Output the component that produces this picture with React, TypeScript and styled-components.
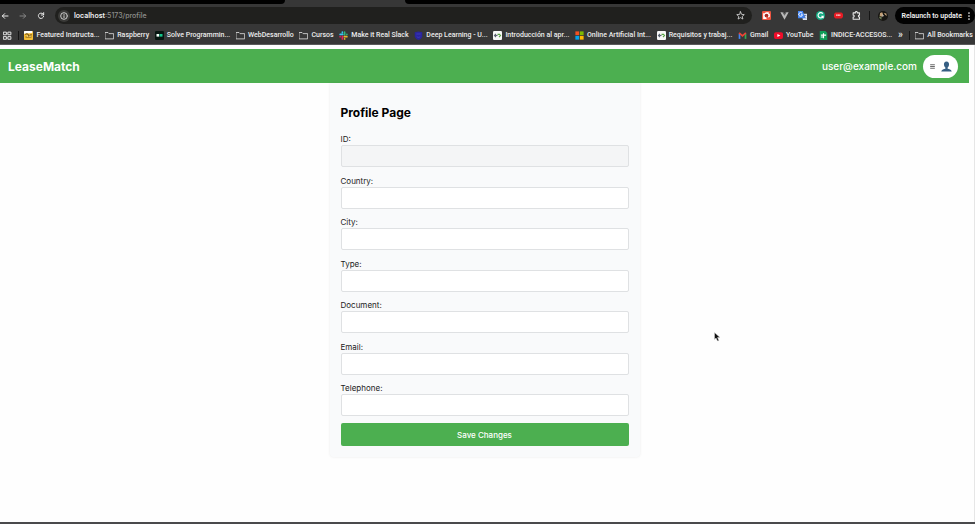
import React from "react";
import styled, { createGlobalStyle, css } from "styled-components";

const GlobalStyle = createGlobalStyle`
  * { box-sizing: border-box; }
  html, body, #root { height: 100%; }
  body { margin: 0; background: #fefefe; color: #222; font-family: Inter, "Liberation Sans", sans-serif; }
  button, input { font: inherit; }
`;

const Screen = styled.div`
  display: flex;
  flex-direction: column;
  min-height: 100vh;
  border-bottom: 2px solid #4a4a4c;
  overflow: hidden;
`;

const Browser = styled.header`
  background: #373737;
  color: #ececec;
  font-family: Roboto, "Liberation Sans", sans-serif;
  font-size: 7px;
  font-weight: 500;
  border-bottom: 1px solid #5a5a5a;
`;

const TabStrip = styled.div`
  display: grid;
  grid-template-columns: 285fr 120fr 570fr;
  height: 4px;
  background: #373737;
`;

const TabGap = styled.div<{ $side: "left" | "right" }>`
  background: #000;
  ${(p) => (p.$side === "left" ? "border-bottom-right-radius: 4px;" : "border-bottom-left-radius: 4px;")}
`;

const Toolbar = styled.div`
  display: flex;
  align-items: center;
  height: 23px;
`;

const NavButtons = styled.nav`
  display: flex;
  gap: 8px;
  padding-right: 9px;
`;

const IconButton = styled.button<{ $dim?: boolean }>`
  display: flex;
  align-items: center;
  justify-content: center;
  width: 10px;
  height: 10px;
  padding: 0;
  border: 0;
  background: none;
  color: ${(p) => (p.$dim ? "#858585" : "#e8e8e8")};
`;

const AddressBar = styled.div`
  display: flex;
  flex: 1;
  align-items: center;
  gap: 4px;
  height: 17px;
  padding: 0 7px 0 3px;
  border-radius: 9px;
  background: #20201e;
`;

const InfoBadge = styled.span`
  display: flex;
  align-items: center;
  justify-content: center;
  width: 12px;
  height: 12px;
  border-radius: 6px;
  background: #3a3a38;
`;

const Address = styled.span`
  flex: 1;
  color: #8f8f8d;
  font-family: Inter, "Liberation Sans", sans-serif;
  font-size: 7px;
  white-space: nowrap;
  b { color: #f2f2f2; font-weight: 600; }
`;

const Extensions = styled.div`
  display: flex;
  align-items: center;
  gap: 8px;
  padding: 0 7px 0 9px;
`;

const Divider = styled.span`
  width: 1px;
  height: 9px;
  background: #151515;
`;

const Relaunch = styled.button`
  display: flex;
  align-items: center;
  gap: 3px;
  height: 17px;
  padding: 0 2px 0 6px;
  border: 0;
  border-radius: 9px;
  background: #020202;
  color: #f1f1f1;
  font-weight: 600;
  white-space: nowrap;
`;

const Bookmarks = styled.nav`
  display: flex;
  align-items: center;
  justify-content: space-between;
  height: 17px;
  padding: 0 2px 1px 2px;
`;

const Bookmark = styled.a`
  display: flex;
  align-items: center;
  gap: 3px;
  color: inherit;
  text-decoration: none;
  white-space: nowrap;
`;

const Overflow = styled.button`
  padding: 0;
  border: 0;
  background: none;
  color: inherit;
  font-size: 10px;
  line-height: 10px;
`;

const Icon = styled.svg<{ $size?: number }>`
  display: block;
  flex: none;
  width: ${(p) => p.$size ?? 9}px;
  height: ${(p) => p.$size ?? 9}px;
`;

const Page = styled.div`
  display: flex;
  flex: 1;
  flex-direction: column;
  padding-top: 4px;
  padding-right: 5px;
  border-right: 1px solid #e6e6e6;
`;

const SiteHeader = styled.header`
  display: flex;
  align-items: center;
  justify-content: space-between;
  height: 34px;
  padding: 0 11px 0 8px;
  background: #4caf50;
  color: #fff;
`;

const Brand = styled.div`
  font-size: 12px;
  font-weight: 700;
`;

const Account = styled.div`
  display: flex;
  align-items: center;
  gap: 6px;
  font-size: 10px;
  font-weight: 500;
`;

const AccountButton = styled.button`
  display: flex;
  align-items: center;
  justify-content: center;
  gap: 5px;
  width: 35px;
  height: 23px;
  padding: 0;
  border: 0;
  border-radius: 12px;
  background: #fff;
`;

const Card = styled.main`
  width: 310px;
  max-width: 100%;
  margin: 0 auto;
  padding: 22px 11px 11px;
  border-radius: 0 0 4px 4px;
  background: #f9fafb;
  box-shadow: 0 0 3px rgba(0, 0, 0, 0.08);
`;

const Title = styled.h1`
  margin: 0 0 12px;
  color: #000;
  font-size: 12px;
  line-height: 16px;
  font-weight: 700;
`;

const Form = styled.form`
  display: flex;
  flex-direction: column;
  gap: 7px;
`;

const Fields = styled.div`
  display: flex;
  flex-direction: column;
  justify-content: space-between;
  min-height: 283px;
`;

const Field = styled.label`
  display: flex;
  flex-direction: column;
  font-size: 8px;
  line-height: 12px;
`;

const controlShape = css`
  width: 100%;
  border-radius: 2px;
`;

const TextInput = styled.input`
  ${controlShape}
  height: 22px;
  padding: 0 5px;
  border: 1px solid #dfe1e3;
  background: #fff;
  &:disabled { background: #f4f5f6; }
`;

const SaveButton = styled.button`
  ${controlShape}
  height: 23px;
  border: 0;
  background: #4caf50;
  color: #fff;
  font-size: 8px;
  font-weight: 500;
`;

const Pointer = styled.svg`
  position: absolute;
  left: 714px;
  top: 332px;
  width: 6px;
  height: 10px;
`;

const stroke = { fill: "none", stroke: "currentColor", strokeWidth: 2, strokeLinecap: "round", strokeLinejoin: "round" } as const;

const glyphs: Record<string, React.ReactNode> = {
  back: <path {...stroke} strokeWidth={3} d="M21 12H4M11 5l-7 7 7 7" />,
  forward: <path {...stroke} strokeWidth={3} d="M3 12h17M13 5l7 7-7 7" />,
  reload: <path {...stroke} strokeWidth={3} d="M20 13a8 8 0 1 1-2-7l2 2M20 2v7h-7" />,
  info: <path {...stroke} strokeWidth={2.4} d="M22 12a10 10 0 1 1-20 0 10 10 0 0 1 20 0M12 11v6M12 7v.5" />,
  star: <path {...stroke} d="m12 2 3 7 7 .6-5.300 4.800 1.700 7.100L12 17.700 5.600 21.500l1.700-7.100L2 9.600 9 9z" />,
  puzzle: <path {...stroke} strokeWidth={2.800} d="M3 5h6c-1-5 6-5 5 0h6v6c-4-1-4 6 0 5v6H3v-6c4 1 4-6 0-5z" />,
  dots: <g fill="currentColor"><circle cx="12" cy="3" r="2.600" /><circle cx="12" cy="12" r="2.600" /><circle cx="12" cy="21" r="2.600" /></g>,
  grid: <path {...stroke} strokeWidth={2.600} d="M2 3h7v7H2zM14 3h7v7h-7zM2 15h7v7H2zM14 15h7v7h-7z" />,
  folder: <path {...stroke} d="M1 4h7l3 3h12v14H1z" />,
  featured: <g><rect width="24" height="24" rx="2" fill="#f3bd35" /><path fill="#fff" d="M0 2a2 2 0 0 1 2-2h20v5L0 7z" /><path stroke="#75510d" strokeWidth="3" fill="none" d="M4 10c2-4 6-3 7 0s7 3 9-1M4 16h16" /><path fill="#f7dc8e" d="M7 12h4v3H7zM14 12h4v3h-4z" /></g>,
  solve: <g><rect width="24" height="24" rx="3" fill="#071611" /><path fill="#f5fffb" d="M4 8h7v7H4z" /><path fill="#13c58a" d="M12 8h8v7h-8z" /></g>,
  slack: <g fill="none" strokeWidth="4.500" strokeLinecap="round"><path stroke="#36c5f0" d="M3 9h7M9 3v1" /><path stroke="#2eb67d" d="M15 3v7M21 9h0" /><path stroke="#ecb22e" d="M14 15h7M15 21h0" /><path stroke="#e01e5a" d="M9 14v7M3 15h0" /></g>,
  deep: <g><path fill="#29259c" d="M2 3l10-2 10 2v12l-4 6-6 3-6-3-4-6z" /><path fill="none" stroke="#4740c3" strokeWidth="2" d="M6 8h12M7 14c3 4 7 4 10 0" /></g>,
  code: <g><rect width="24" height="24" rx="3" fill="#f7f7f7" /><path fill="none" stroke="#5b6270" strokeWidth="3" d="M8 8l-4 4 4 4M4 12h8" /><path fill="none" stroke="#57a341" strokeWidth="3" d="M16 8l4 4-4 4M12 9h6" /></g>,
  microsoft: <g><path fill="#f25022" d="M1 1h10v10H1z" /><path fill="#7fba00" d="M13 1h10v10H13z" /><path fill="#00a4ef" d="M1 13h10v10H1z" /><path fill="#ffb900" d="M13 13h10v10H13z" /></g>,
  gmail: <g fill="none" strokeWidth="4.500"><path stroke="#4285f4" d="M4 21V7" /><path stroke="#34a853" d="M20 21V7" /><path stroke="#ea4335" d="M3 5l9 8 9-8" /></g>,
  youtube: <g><rect y="3" width="24" height="18" rx="5" fill="#f00c29" /><path fill="#fff" d="m9 8 8 4-8 4z" /></g>,
  sheet: <g><path fill="#0f9d58" d="M2 0h15l5 5v19H2z" /><path stroke="#fff" strokeWidth="3" fill="none" d="M5 11h14M12 6v13M5 16h7" /></g>,
  camera: <g><rect width="24" height="24" rx="3" fill="#ed5541" /><path fill="#fff" d="M3 6h5l2-3h8v4h3v8l-4 2-4 4H3z" /><circle cx="12" cy="12" r="5" fill="#a92822" /><path fill="#ed5541" d="M12 13l9 8h-9z" /></g>,
  vue: <g><path fill="#b9b9b9" d="M1 3h6l5 9 5-9h6L12 23z" /><path fill="#696969" d="M7 3h3l2 4 2-4h3l-5 9z" /></g>,
  translate: <g><path fill="#dfe5ef" d="M10 7h14v17H13z" /><path fill="#4285f4" d="M0 0h13l6 19H0z" /><path fill="none" stroke="#fff" strokeWidth="2.500" d="M11 6a5 5 0 1 0 1 4H8" /><path fill="none" stroke="#4c6fb5" strokeWidth="2" d="M15 12h7M18 10v3c0 3-2 5-3 6M17 15l4 5" /></g>,
  grammarly: <g><circle cx="12" cy="12" r="12" fill="#16aa83" /><path fill="none" stroke="#fff" strokeWidth="3" d="M18 7a7 7 0 1 0 1 7h-5M19 13v6" /></g>,
  red: <g><path fill="#e51b23" d="M4 4h16l4 4v8l-4 4H4l-4-4V8z" /><path stroke="#fff" strokeWidth="3" strokeDasharray="3 1" d="M6 11h12" /></g>,
  avatar: <g><circle cx="12" cy="12" r="12" fill="#171612" /><path fill="#c3a078" d="M5 5l5-2 2 5-3 6-5-2zM14 5l6 1 1 6-4-3z" /><path fill="#6c7a57" d="M3 13l6 2-1 6-5-4z" /><path fill="#e5ddd0" d="M10 8l4 3-3 4z" /></g>,
};

function Glyph({ name, size }: { name: string; size?: number }) {
  return <Icon viewBox="0 0 24 24" $size={size} aria-hidden="true">{glyphs[name]}</Icon>;
}

const bookmarks = [
  ["featured", "Featured Instructa..."],
  ["folder", "Raspberry"],
  ["solve", "Solve Programmin..."],
  ["folder", "WebDesarrollo"],
  ["folder", "Cursos"],
  ["slack", "Make it Real Slack"],
  ["deep", "Deep Learning - U..."],
  ["code", "Introducción al apr..."],
  ["microsoft", "Online Artificial Int..."],
  ["code", "Requisitos y trabaj..."],
  ["gmail", "Gmail"],
  ["youtube", "YouTube"],
  ["sheet", "INDICE-ACCESOS..."],
];

const fields = ["ID", "Country", "City", "Type", "Document", "Email", "Telephone"];
const extensions = ["camera", "vue", "translate", "grammarly", "red", "puzzle"];

export default function App() {
  return (
    <Screen>
      <GlobalStyle />
      <Browser>
        <TabStrip><TabGap $side="left" /><span /><TabGap $side="right" /></TabStrip>
        <Toolbar>
          <NavButtons aria-label="History">
            <IconButton aria-label="Back"><Glyph name="back" size={8} /></IconButton>
            <IconButton aria-label="Forward" $dim><Glyph name="forward" size={8} /></IconButton>
            <IconButton aria-label="Reload"><Glyph name="reload" size={8} /></IconButton>
          </NavButtons>
          <AddressBar>
            <InfoBadge><Glyph name="info" size={8} /></InfoBadge>
            <Address><b>localhost</b>:5173/profile</Address>
            <IconButton aria-label="Bookmark this page"><Glyph name="star" /></IconButton>
          </AddressBar>
          <Extensions>
            {extensions.map((name) => (
              <IconButton key={name} aria-label={name}><Glyph name={name} /></IconButton>
            ))}
            <Divider />
            <IconButton aria-label="Account"><Glyph name="avatar" size={10} /></IconButton>
          </Extensions>
          <Relaunch>Relaunch to update<Glyph name="dots" size={8} /></Relaunch>
        </Toolbar>
        <Bookmarks aria-label="Bookmarks">
          <IconButton aria-label="Apps"><Glyph name="grid" /></IconButton>
          <Divider />
          {bookmarks.map(([icon, label]) => (
            <Bookmark href="#" key={label}><Glyph name={icon} />{label}</Bookmark>
          ))}
          <Overflow aria-label="More bookmarks">»</Overflow>
          <Divider />
          <Bookmark href="#"><Glyph name="folder" />All Bookmarks</Bookmark>
        </Bookmarks>
      </Browser>
      <Page>
        <SiteHeader>
          <Brand>LeaseMatch</Brand>
          <Account>
            <span>user@example.com</span>
            <AccountButton aria-label="Account menu">
              <Icon viewBox="0 0 12 12" $size={7}>
                <path stroke="#555" strokeWidth="1.500" d="M2 3h8M2 6h8M2 9h8" />
              </Icon>
              <Icon viewBox="0 0 24 24" $size={11}>
                <path fill="#365f83" d="M12 1c4 0 6 3 5.500 7-.4 3-1.500 5-3 6v3c3 1 8 2 9 6H.5c1-4 6-5 9-6v-3c-1.500-1-2.600-3-3-6C6 4 8 1 12 1z" />
              </Icon>
            </AccountButton>
          </Account>
        </SiteHeader>
        <Card>
          <Title>Profile Page</Title>
          <Form onSubmit={(e) => e.preventDefault()}>
            <Fields>
              {fields.map((name) => (
                <Field key={name}>{name}:<TextInput name={name.toLowerCase()} disabled={name === "ID"} /></Field>
              ))}
            </Fields>
            <SaveButton type="submit">Save Changes</SaveButton>
          </Form>
        </Card>
      </Page>
      <Pointer viewBox="0 0 12 20" aria-hidden="true">
        <path fill="#111" stroke="#ddd" strokeWidth="1" d="M1 1v14l3-3 3 6 3-1-3-6h5z" />
      </Pointer>
    </Screen>
  );
}
